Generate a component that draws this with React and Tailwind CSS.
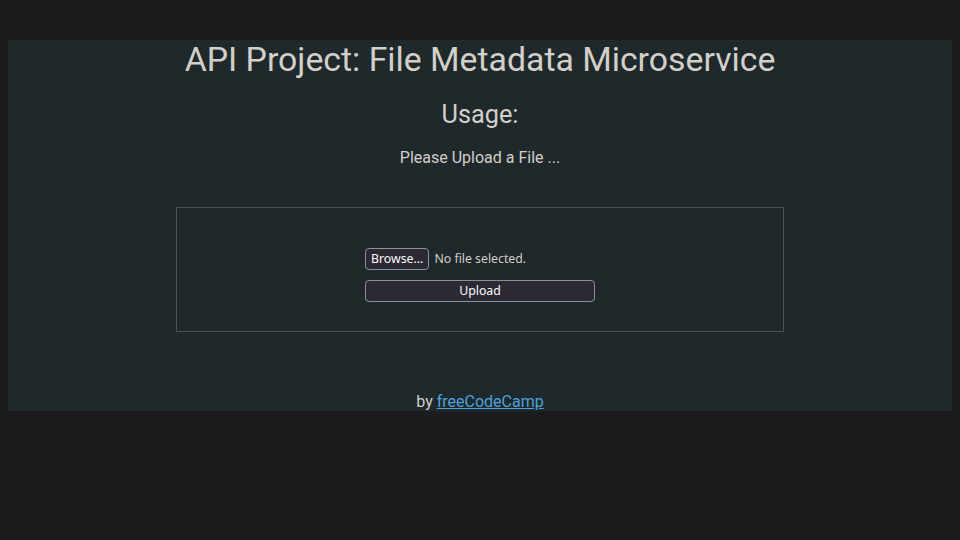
export default function App() {
  return (
    <div className="min-h-[540px] w-full bg-[#1b1c1e] pt-[40px] px-[8px]" style={{ fontFamily: 'Roboto, sans-serif' }}>
      <div className="bg-[#1f282b] h-[371px] flex flex-col items-center text-[#d3cfc9]">
        <h1 className="shrink-0 text-[33.8px] leading-[40px] mt-0 font-normal">API Project: File Metadata Microservice</h1>
        <h3 className="shrink-0 text-[25.3px] leading-[28px] mt-[21px] font-normal">Usage:</h3>
        <p className="shrink-0 text-[16px] leading-[20px] mt-[19px]">Please Upload a File ...</p>
        <div className="shrink-0 mt-[39px] w-[608px] h-[125px] border border-[#4a5255] flex justify-center pt-[40px]">
          <div className="w-[230px] flex flex-col" style={{ fontFamily: '"Noto Sans", sans-serif' }}>
            <div className="flex items-center h-[22px]">
              <div className="h-[22px] px-[5px] flex items-center border border-[#8f8f9d] rounded-[4px] bg-[#2b2a33] text-[#fbfbfe] text-[12.3px]">Browse...</div>
              <span className="ml-[5px] text-[12.3px] text-[#d3cfc9]">No file selected.</span>
            </div>
            <div className="mt-[10px] h-[22px] w-[230px] flex items-center justify-center border border-[#8f8f9d] rounded-[4px] bg-[#2b2a33] text-[#fbfbfe] text-[12.3px]">Upload</div>
          </div>
        </div>
        <p className="shrink-0 mt-[60px] text-[16px] leading-[20px]">
          by <a href="#" className="text-[#4ca3dd] underline">freeCodeCamp</a>
        </p>
      </div>
    </div>
  );
}
